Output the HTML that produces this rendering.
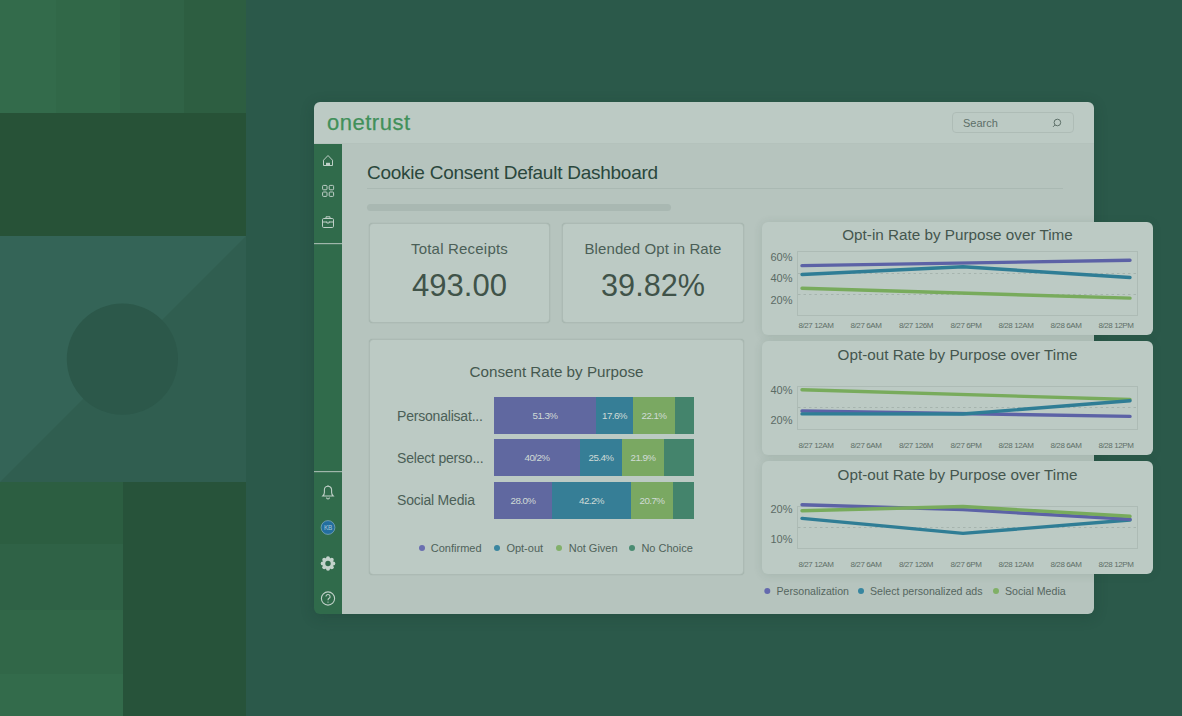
<!DOCTYPE html>
<html><head><meta charset="utf-8">
<style>
*{margin:0;padding:0;box-sizing:border-box}
html,body{width:1182px;height:716px;overflow:hidden}
body{background:#2b594a;font-family:"Liberation Sans",sans-serif;position:relative}
.abs{position:absolute}
/* left mosaic */
.b{position:absolute}
/* dashboard */
#dash{position:absolute;left:314px;top:102px;width:780px;height:512px;border-radius:6px;overflow:hidden;box-shadow:0 3px 14px rgba(20,45,35,0.22)}
#cbg{position:absolute;left:28px;top:42px;width:752px;height:470px;background:#b6c4be}
#hdr{position:absolute;left:0;top:0;width:780px;height:42px;background:#bccac4;border-bottom:1px solid #b4c2bc}
#side{position:absolute;left:0;top:42px;width:28px;height:470px;background:#306b4b}
.card{position:absolute;background:#bccac4;border:1px solid #acbab4;border-radius:4px;box-shadow:0 0 1px rgba(60,85,75,0.3)}
.ccard{position:absolute;background:#bccac4;border-radius:6px;box-shadow:0 1px 10px rgba(40,70,60,0.12)}
.t{position:absolute;white-space:nowrap;line-height:1}
.seg{display:flex;align-items:center;justify-content:center;font-size:9.8px;color:#d0dbd6;letter-spacing:-0.6px;white-space:nowrap}
.dot{display:inline-block;width:6px;height:6px;border-radius:50%;margin-right:7px;vertical-align:1px}
</style></head>
<body>
<!-- left mosaic -->
<div class="b" style="left:0;top:0;width:56px;height:113px;background:#336b4b"></div>
<div class="b" style="left:56px;top:0;width:64px;height:113px;background:#316848"></div>
<div class="b" style="left:120px;top:0;width:64px;height:113px;background:#306346"></div>
<div class="b" style="left:184px;top:0;width:62px;height:113px;background:#2d5e41"></div>
<div class="b" style="left:0;top:113px;width:246px;height:123px;background:#275237"></div>
<svg class="b" style="left:0;top:236px" width="246" height="246">
  <rect width="246" height="246" fill="#305e50"/>
  <polygon points="0,0 246,0 0,246" fill="#346457"/>
  <circle cx="122.4" cy="123.1" r="55.6" fill="#2c584a"/>
</svg>
<div class="b" style="left:0;top:482px;width:123px;height:62px;background:#2c5e41"></div>
<div class="b" style="left:0;top:544px;width:123px;height:66px;background:#2f6246"></div>
<div class="b" style="left:0;top:610px;width:123px;height:64px;background:#316748"></div>
<div class="b" style="left:0;top:674px;width:123px;height:42px;background:#336b4b"></div>
<div class="b" style="left:123px;top:482px;width:123px;height:234px;background:#27533a"></div>

<div id="dash">
  <div id="cbg"></div>
  <div id="hdr">
    <div class="t" style="left:13px;top:10.2px;font-size:22px;color:#41905a;letter-spacing:0.5px;-webkit-text-stroke:0.25px #41905a">onetrust</div>
    <div class="abs" style="left:638px;top:10px;width:122px;height:21px;border:1px solid #aebcb6;border-radius:4px"></div>
    <div class="t" style="left:649px;top:16px;font-size:11px;color:#5d6f68">Search</div>
    <svg class="abs" style="left:737px;top:16px" width="11" height="10" viewBox="0 0 11 10"><circle cx="6.4" cy="4.5" r="3.3" fill="none" stroke="#5d6f68" stroke-width="1"/><line x1="4" y1="6.9" x2="2" y2="8.9" stroke="#5d6f68" stroke-width="1"/></svg>
  </div>
  <div id="side">
    <svg class="abs" style="left:0;top:0" width="28" height="470" viewBox="0 0 28 470">
      <g fill="none" stroke="#bfcfc7" stroke-width="1">
        <path d="M9.5 21.5 V16.2 L14 11.5 L18.5 16.2 V21.5 Z"/>
        <rect x="8.6" y="41.4" width="4.4" height="4.4" rx="0.9"/>
        <rect x="15.2" y="41.4" width="4.4" height="4.4" rx="0.9"/>
        <rect x="8.6" y="48" width="4.4" height="4.4" rx="0.9"/>
        <rect x="15.2" y="48" width="4.4" height="4.4" rx="0.9"/>
        <rect x="8.5" y="74.5" width="11" height="9" rx="1.2"/>
        <path d="M12 74.5 V72.8 H16 V74.5"/>
        <path d="M8.5 78 H12.8 M15.2 78 H19.5"/>
        <path d="M12.8 77.5 V79 H15.2 V77.5"/>
      </g>
      <rect x="12" y="18.8" width="4" height="2.7" fill="#bfcfc7"/>
      <rect x="0" y="99" width="28" height="1.2" fill="#9fb6aa"/>
      <rect x="0" y="327" width="28" height="1.2" fill="#9fb6aa"/>
      <g fill="none" stroke="#bfcfc7" stroke-width="1.1">
        <path d="M8.8 352 H19.2 C18 350.8 17.6 350 17.6 348.5 V345.8 A3.6 3.6 0 0 0 10.4 345.8 V348.5 C10.4 350 10 350.8 8.8 352 Z"/>
        <path d="M12.6 353.6 A1.4 1.4 0 0 0 15.4 353.6"/>
      </g>
      <circle cx="14" cy="341.9" r="0.7" fill="#bfcfc7"/>
      <circle cx="14" cy="383.5" r="6.9" fill="#236e9f" stroke="#86aebd" stroke-width="0.7"/>
      <text x="14" y="385.7" font-family="Liberation Sans" font-size="6.4" fill="#a9c8d6" text-anchor="middle" letter-spacing="-0.2">KB</text>
      <g transform="translate(14 419.5)" fill="#c3d2cb">
        <circle r="5.4"/><circle cx="5.30" cy="0.00" r="2"/><circle cx="3.75" cy="3.75" r="2"/><circle cx="0.00" cy="5.30" r="2"/><circle cx="-3.75" cy="3.75" r="2"/><circle cx="-5.30" cy="0.00" r="2"/><circle cx="-3.75" cy="-3.75" r="2"/><circle cx="-0.00" cy="-5.30" r="2"/><circle cx="3.75" cy="-3.75" r="2"/>
        <circle r="2.7" fill="#306b4b"/>
      </g>
      <circle cx="14" cy="454.5" r="6.6" fill="none" stroke="#bfcfc7" stroke-width="1.1"/>
      <path d="M11.9 452.6 A2.1 2.1 0 1 1 14.8 454.6 C14.1 455 14 455.4 14 456.3" fill="none" stroke="#bfcfc7" stroke-width="1.1"/>
      <circle cx="14" cy="458.1" r="0.7" fill="#bfcfc7"/>
    </svg>
  </div>
  <div class="t" style="left:53px;top:61px;font-size:19px;color:#2a473c;letter-spacing:-0.25px">Cookie Consent Default Dashboard</div>
  <div class="abs" style="left:53px;top:86px;width:696px;height:1px;background:#aab9b3"></div>
  <div class="abs" style="left:53px;top:102px;width:304px;height:7px;background:#a9b8b2;border-radius:4px"></div>
  <div class="card" style="left:55px;top:121px;width:181px;height:100px"></div>
  <div class="card" style="left:248px;top:121px;width:182px;height:100px"></div>
  <div class="t" style="left:55px;width:181px;text-align:center;top:139px;font-size:15px;color:#4b5f57;letter-spacing:0.2px">Total Receipts</div>
  <div class="t" style="left:55px;width:181px;text-align:center;top:168px;font-size:31px;color:#405349">493.00</div>
  <div class="t" style="left:248px;width:182px;text-align:center;top:139px;font-size:15px;color:#4b5f57;letter-spacing:0.1px">Blended Opt in Rate</div>
  <div class="t" style="left:248px;width:182px;text-align:center;top:168px;font-size:30.6px;color:#405349">39.82%</div>
  <div class="card" style="left:55px;top:237px;width:375px;height:236px"></div>
  <div class="t" style="left:55px;width:375px;text-align:center;top:262px;font-size:15.2px;color:#45584f">Consent Rate by Purpose</div>
  <div class="t" style="left:83px;top:307px;font-size:14px;color:#4b5f57;letter-spacing:-0.2px">Personalisat...</div>
  <div class="t" style="left:83px;top:349px;font-size:14px;color:#4b5f57;letter-spacing:-0.2px">Select perso...</div>
  <div class="t" style="left:83px;top:391px;font-size:14px;color:#4b5f57;letter-spacing:-0.2px">Social Media</div>
  <div class="abs" style="left:180px;top:295px;width:200px;height:37px;display:flex"><div class="seg" style="width:102px;background:#6068a0">51.3%</div><div class="seg" style="width:37px;background:#367e96">17.6%</div><div class="seg" style="width:42px;background:#7aa862">22.1%</div><div class="seg" style="flex:1;background:#44846c"></div></div>
  <div class="abs" style="left:180px;top:337px;width:200px;height:37px;display:flex"><div class="seg" style="width:86px;background:#6068a0">40/2%</div><div class="seg" style="width:42px;background:#367e96">25.4%</div><div class="seg" style="width:42px;background:#7aa862">21.9%</div><div class="seg" style="flex:1;background:#44846c"></div></div>
  <div class="abs" style="left:180px;top:380px;width:200px;height:37px;display:flex"><div class="seg" style="width:58px;background:#6068a0">28.0%</div><div class="seg" style="width:79px;background:#367e96">42.2%</div><div class="seg" style="width:42px;background:#7aa862">20.7%</div><div class="seg" style="flex:1;background:#44846c"></div></div>
  <div class="abs" style="left:104.8px;top:443.3px;width:6px;height:6px;border-radius:50%;background:#6a6fb0"></div>
  <div class="t" style="left:116.8px;top:440.8px;font-size:11px;color:#4f625a">Confirmed</div>
  <div class="abs" style="left:180.4px;top:443.3px;width:6px;height:6px;border-radius:50%;background:#3a86a0"></div>
  <div class="t" style="left:192.4px;top:440.8px;font-size:11px;color:#4f625a">Opt-out</div>
  <div class="abs" style="left:242.4px;top:443.3px;width:6px;height:6px;border-radius:50%;background:#82b06a"></div>
  <div class="t" style="left:254.7px;top:440.8px;font-size:11px;color:#4f625a">Not Given</div>
  <div class="abs" style="left:315.4px;top:443.3px;width:6px;height:6px;border-radius:50%;background:#4a8c72"></div>
  <div class="t" style="left:327.4px;top:440.8px;font-size:11px;color:#4f625a">No Choice</div>
</div>
<div class="ccard" style="left:762px;top:222px;width:391px;height:113px"></div>
<div class="ccard" style="left:762px;top:341px;width:391px;height:114px"></div>
<div class="ccard" style="left:762px;top:461px;width:391px;height:113px"></div>
<svg class="abs" style="left:0;top:0" width="1182" height="716" viewBox="0 0 1182 716">
<style>
.ct{font-family:"Liberation Sans";font-size:15.25px;fill:#44564e;text-anchor:middle}
.yl{font-family:"Liberation Sans";font-size:11px;fill:#5b6b64;text-anchor:end}
.xl{font-family:"Liberation Sans";font-size:8px;fill:#5f6f68;text-anchor:middle;letter-spacing:-0.4px}
.lg{font-family:"Liberation Sans";font-size:10.6px;fill:#55665e}
</style>
<text x="957.5" y="240.3" class="ct">Opt-in Rate by Purpose over Time</text>
<rect x="797.5" y="251.5" width="340" height="64" fill="none" stroke="#adbbb5" stroke-width="1"/>
<line x1="798" y1="273.5" x2="1137" y2="273.5" stroke="#a6b4ae" stroke-width="1" stroke-dasharray="2.5 3"/>
<line x1="798" y1="294.5" x2="1137" y2="294.5" stroke="#a6b4ae" stroke-width="1" stroke-dasharray="2.5 3"/>
<text x="792.5" y="260.6" class="yl">60%</text>
<text x="792.5" y="281.5" class="yl">40%</text>
<text x="792.5" y="304.2" class="yl">20%</text>
<text x="816" y="328" class="xl">8/27 12AM</text>
<text x="866" y="328" class="xl">8/27 6AM</text>
<text x="916" y="328" class="xl">8/27 126M</text>
<text x="966" y="328" class="xl">8/27 6PM</text>
<text x="1016" y="328" class="xl">8/28 12AM</text>
<text x="1066" y="328" class="xl">8/28 6AM</text>
<text x="1116" y="328" class="xl">8/28 12PM</text>
<polyline points="802,288.3 1130,298.1" fill="none" stroke="#78ab5c" stroke-width="3.4" stroke-linecap="round" stroke-linejoin="round"/>
<polyline points="802,274.5 963,266.8 1130,277.5" fill="none" stroke="#2f7d95" stroke-width="3.4" stroke-linecap="round" stroke-linejoin="round"/>
<polyline points="802,265.6 1130,260.3" fill="none" stroke="#5c62a6" stroke-width="3.4" stroke-linecap="round" stroke-linejoin="round"/>
<text x="957.5" y="360.3" class="ct">Opt-out Rate by Purpose over Time</text>
<rect x="797.5" y="386.5" width="340" height="43" fill="none" stroke="#adbbb5" stroke-width="1"/>
<line x1="798" y1="407.5" x2="1137" y2="407.5" stroke="#a6b4ae" stroke-width="1" stroke-dasharray="2.5 3"/>
<text x="792.5" y="394" class="yl">40%</text>
<text x="792.5" y="424.2" class="yl">20%</text>
<text x="816" y="447.7" class="xl">8/27 12AM</text>
<text x="866" y="447.7" class="xl">8/27 6AM</text>
<text x="916" y="447.7" class="xl">8/27 126M</text>
<text x="966" y="447.7" class="xl">8/27 6PM</text>
<text x="1016" y="447.7" class="xl">8/28 12AM</text>
<text x="1066" y="447.7" class="xl">8/28 6AM</text>
<text x="1116" y="447.7" class="xl">8/28 12PM</text>
<polyline points="802,389.7 1130,399.5" fill="none" stroke="#78ab5c" stroke-width="3.4" stroke-linecap="round" stroke-linejoin="round"/>
<polyline points="802,411 1130,416.4" fill="none" stroke="#5c62a6" stroke-width="3.4" stroke-linecap="round" stroke-linejoin="round"/>
<polyline points="802,413.9 963,414 1130,400.7" fill="none" stroke="#2f7d95" stroke-width="3.4" stroke-linecap="round" stroke-linejoin="round"/>
<text x="957.5" y="479.9" class="ct">Opt-out Rate by Purpose over Time</text>
<rect x="797.5" y="506.5" width="340" height="42" fill="none" stroke="#adbbb5" stroke-width="1"/>
<line x1="798" y1="527.5" x2="1137" y2="527.5" stroke="#a6b4ae" stroke-width="1" stroke-dasharray="2.5 3"/>
<text x="792.5" y="513.1" class="yl">20%</text>
<text x="792.5" y="543.4" class="yl">10%</text>
<text x="816" y="566.9" class="xl">8/27 12AM</text>
<text x="866" y="566.9" class="xl">8/27 6AM</text>
<text x="916" y="566.9" class="xl">8/27 126M</text>
<text x="966" y="566.9" class="xl">8/27 6PM</text>
<text x="1016" y="566.9" class="xl">8/28 12AM</text>
<text x="1066" y="566.9" class="xl">8/28 6AM</text>
<text x="1116" y="566.9" class="xl">8/28 12PM</text>
<polyline points="802,518.4 963,533.4 1130,520" fill="none" stroke="#2f7d95" stroke-width="3.4" stroke-linecap="round" stroke-linejoin="round"/>
<polyline points="802,504.8 963,509.6 1130,519.3" fill="none" stroke="#5c62a6" stroke-width="3.4" stroke-linecap="round" stroke-linejoin="round"/>
<polyline points="802,510.8 963,506.5 1130,516.3" fill="none" stroke="#78ab5c" stroke-width="3.4" stroke-linecap="round" stroke-linejoin="round"/>
<circle cx="767.3" cy="591" r="3" fill="#6469ae"/>
<text x="776.5" y="595" class="lg">Personalization</text>
<circle cx="861" cy="591" r="3" fill="#3786a0"/>
<text x="870" y="595" class="lg">Select personalized ads</text>
<circle cx="996" cy="591" r="3" fill="#80b066"/>
<text x="1005" y="595" class="lg">Social Media</text>
</svg>
</body></html>
